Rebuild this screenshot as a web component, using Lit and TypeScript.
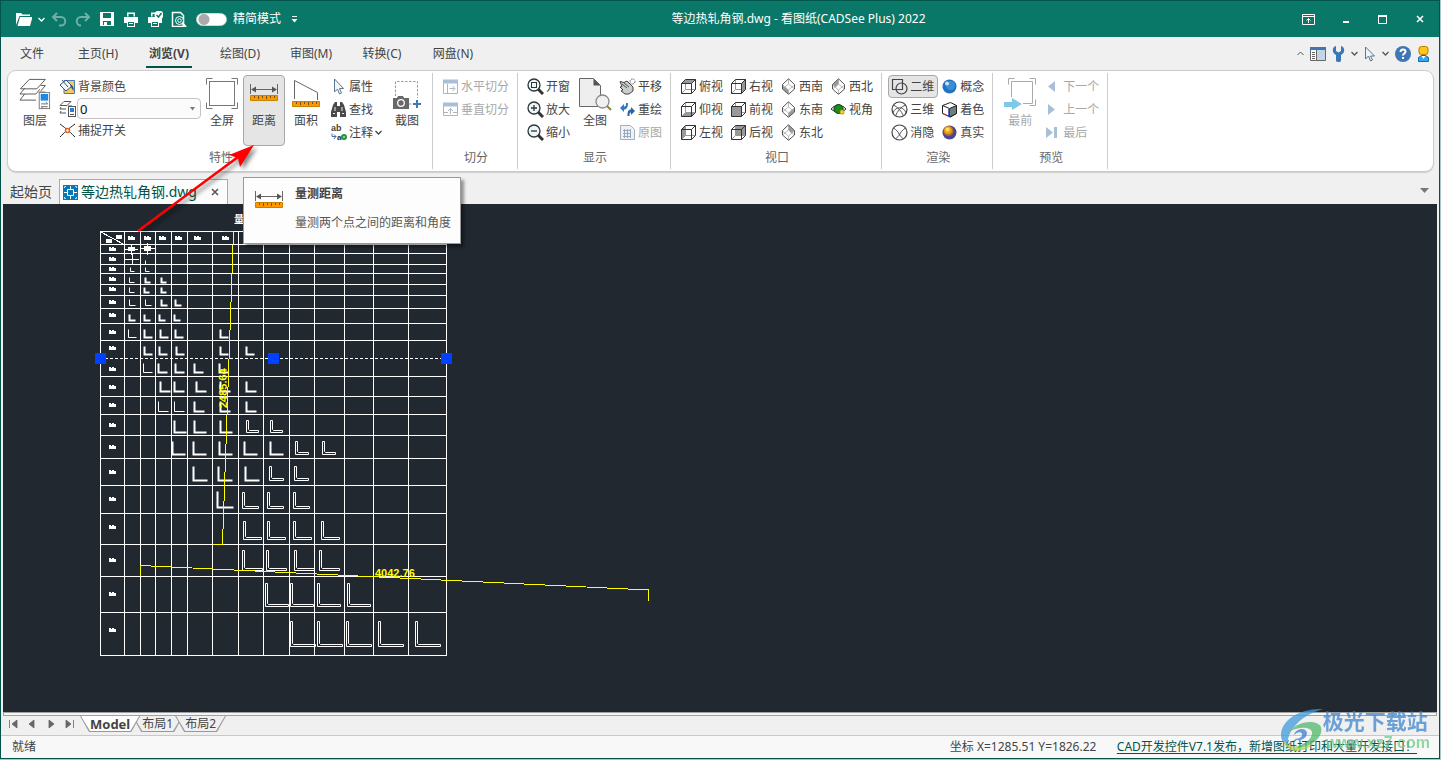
import { LitElement, html, svg, css, nothing, TemplateResult, SVGTemplateResult } from "lit";
import { customElement, property, state } from "lit/decorators.js";
import { classMap } from "lit/directives/class-map.js";

const FADE = "#a9bfd6";

const icon = (w: number, h: number, body: SVGTemplateResult) =>
  html`<svg class="ic" width=${w} height=${h} viewBox="0 0 ${w} ${h}" fill="none" aria-hidden="true">${body}</svg>`;

/* ---------- title bar glyphs ---------- */
const printer = svg`<path d="M4 1.5h8v4H4z M1 6h14v6h-3v-2H4v2H1z" fill="#fff"/><path d="M5.500 3h5v3h-5z" fill="#0a7868"/><rect x="4.500" y="10.500" width="7" height="5" fill="#0a7868" stroke="#fff"/><path d="M6 12.500h4" stroke="#fff"/>`;
const titleIcons: Record<string, TemplateResult> = {
  open: icon(16, 16, svg`<path d="M0 14V2h5l1.500 1.500H14V5H3.500z" fill="#fff"/><path d="M4 6h12.500L14 15H1.500z" fill="#fff"/>`),
  undo: icon(16, 16, svg`<path d="M6 2L2 6l4 4M2 6h8a4 4 0 0 1 0 8.500H8" stroke="#6fb0a6" stroke-width="2"/>`),
  redo: icon(16, 16, svg`<path d="M10 2l4 4-4 4M14 6H6a4 4 0 0 0 0 8.500" stroke="#6fb0a6" stroke-width="2"/>`),
  save: icon(16, 16, svg`<path d="M1 1h14v14H1z" fill="#fff"/><path d="M4 2h8v5H4zM4 10h8v4H4z" fill="#0a7868"/><path d="M5 11h3v3H5z" fill="#fff"/>`),
  print: icon(16, 16, printer),
  batch: icon(16, 16, svg`${printer}<circle cx="12" cy="4" r="4.500" fill="#fff"/><path d="M9.500 4l2 2 3-4" stroke="#0a7868" stroke-width="1.500"/>`),
  preview: icon(16, 16, svg`<path d="M1.500 1.500h8l3 3v11h-11z" stroke="#fff" stroke-width="1.500"/><circle cx="8.500" cy="9.500" r="4" fill="#0a7868" stroke="#fff"/><circle cx="8.500" cy="9.500" r="1.800" stroke="#fff"/><path d="M11 12l4 4" stroke="#fff" stroke-width="2"/>`),
};
const chevron = (c: string) => icon(7, 5, svg`<path d="M.5 1l3 3 3-3" stroke=${c} stroke-width="1.300"/>`);

/* ---------- large ribbon icons, 32 x 32 ---------- */
const ruler = svg`<path d="M2.500 6v10M29.500 6v10M4 11.500h24" stroke="#666"/><path d="M3 11.500l5-3v6zM29 11.500l-5-3v6z" fill="#555"/>
  <path d="M2.500 17.500h27v5h-27z" fill="#ff9800" stroke="#c98200"/><path d="M6.500 18v2M10.500 18v3M14.500 18v2M18.500 18v3M22.500 18v2M26.500 18v2" stroke="#6b5220"/>`;
const frame = (c: string) => svg`<path d="M.5 6.500v-6h6M25.500.5h6v6M31.500 24.500v6h-6M6.500 30.500h-6v-6" stroke=${c}/>`;
const big: Record<string, TemplateResult> = {
  layer: icon(32, 34, svg`<path d="M10 1.500h17l-9 10H.5z" stroke="#555"/><path d="M5 11l-5 6h17l4-5M5 17l-5 6.500h17M22 8h5l-5 6M20 15h7" stroke="#555"/>
    <rect x="20.500" y="15.500" width="11" height="17" fill="#fff" stroke="#777"/><path d="M22 17h8v7h-8z" fill="#1e88e5"/><path d="M22.500 27.500h7l-2-2M29.500 30.500h-7l2 2" stroke="#666"/>`),
  full: icon(32, 32, svg`${frame("#777")}<rect x="3.500" y="3.500" width="25" height="24" stroke="#777"/>`),
  dist: icon(32, 32, ruler),
  area: icon(32, 32, svg`<path d="M4.500 21V2.500l23 12V22" stroke="#666"/><path d="M2.500 23.500h27v5h-27z" fill="#ff9800" stroke="#c98200"/><path d="M6.500 24v2M10.500 24v3M14.500 24v2M18.500 24v3M22.500 24v2M26.500 24v2" stroke="#6b5220"/>`),
  shot: icon(32, 32, svg`<path d="M4.500 18V3.500h22V20M18 26h4" stroke="#999" stroke-dasharray="2.500 1.500"/><path d="M2 20h4l1-2h5l1 2h5v11H2z" fill="#686868"/><circle cx="10" cy="25" r="3.300" stroke="#fff" stroke-width="1.300"/><path d="M26 22v8M22 26h8" stroke="#3d7ab8" stroke-width="2"/>`),
  extents: icon(32, 32, svg`<path d="M.5.500h14l7 7v21H.5z" fill="#eee" stroke="#666"/><path d="M14.500.500l7 7h-7z" fill="#555"/><circle cx="23.500" cy="23.500" r="6.500" fill="#f0f0f0" stroke="#888" stroke-width="1.300"/><path d="M28 28l4 4" stroke="#8a8440" stroke-width="2"/>`),
  first: icon(32, 32, svg`<path d="M4.500 6.500v-6h6M25.500.5h6v6M31.500 21.500v6h-6" stroke="#aaa"/><path d="M7.500 19V3.500h21v22H19" stroke="#aaa"/><path d="M0 24h8v-4l10 6-10 6v-3H0z" fill="#7ccae5"/>`),
};

/* ---------- small ribbon icons, 17 x 17 ---------- */
const sm = (b: SVGTemplateResult) => icon(17, 17, b);
const lens = (b: SVGTemplateResult) => sm(svg`<path d="M11 11l5 5" stroke="#333" stroke-width="3"/><circle cx="7" cy="7" r="6" fill="#eef5f7" stroke="#26383c" stroke-width="1.300"/>${b}`);
const faces: Record<string, string> = {
  top: "1.5,5.5 5.5,1.5 15.5,1.5 11.5,5.5",
  bottom: "1.5,15.5 11.5,15.5 15.5,11.5 5.5,11.5",
  left: "1.5,5.5 5.5,1.5 5.5,11.5 1.5,15.5",
  right: "11.5,5.5 15.5,1.5 15.5,11.5 11.5,15.5",
  front: "1.5,5.5 11.5,5.5 11.5,15.5 1.5,15.5",
  back: "5.5,1.5 15.5,1.5 15.5,11.5 5.5,11.5",
};
const cube = (f: string) => sm(svg`<polygon points=${faces[f]} fill="#999"/><path d="M5.500 1.500v10h10M1.500 15.500l4-4" stroke="#999"/>
  <path d="M1.500 5.500h10v10h-10zM1.500 5.500l4-4h10v10l-4 4M11.500 5.500l4-4" stroke="#333"/>`);
const isoFaces: Record<string, string> = {
  sw: "2.5,7 8.5,12 8.5,16 2.5,11",
  se: "14.5,7 8.5,12 8.5,16 14.5,11",
  ne: "8.5,1 14.5,7 11,9 8.5,6",
  nw: "8.5,1 2.5,7 6,9 8.5,6",
};
const iso = (f: string) => sm(svg`<polygon points=${isoFaces[f]} fill="#999"/><path d="M8.500 1v5l-6 5M8.500 6l6 5M2.500 7l6 5 6-5M8.500 12v4" stroke="#aaa" stroke-width=".8"/>
  <path d="M8.500.8l6 5.700v4.500l-6 5.300-6-5.300V6.500z" stroke="#555"/>`);
const pointer = svg`<path d="M4.500 1v13l3-3 2 5 2-1-2-4.500h4z" fill="#f2f7fc" stroke="#5c7590"/>`;
const small: Record<string, TemplateResult> = {
  bg: sm(svg`<path d="M5 2.500h10.500v13H5z" fill="#f6c860" stroke="#4a7ab0"/><path d="M1 7l6-5 6 6-6 5z" fill="#f2f5f8" stroke="#3b5675"/><path d="M3 2l6 7" stroke="#3b5675"/><path d="M11 7c3 0 4 3 3.500 6l-2-3z" fill="#274f87"/>`),
  layers: sm(svg`<path d="M5 1.500h7l-4 4H1zM2 7l-1 2h6M2 11l-1 2h6M9 6h4" stroke="#555"/><rect x="9.500" y="6.500" width="7" height="10" fill="#fff" stroke="#555"/><path d="M11 8h4v4h-4z" fill="#2a7fd4"/><path d="M11 14.500h4" stroke="#555"/>`),
  snap: sm(svg`<path d="M1 2c4 3 8 6 15 13M16 2C9 7 5 11 1 15" stroke="#222"/><circle cx="8.500" cy="8.500" r="2" fill="#fff" stroke="#e8601c" stroke-width="1.500"/>`),
  props: sm(pointer),
  find: sm(svg`<path d="M3 4l2-3h2v4h3V1h2l2 3 2 7v5h-6v-5H7v5H1v-5z" fill="#4a4a4a"/><path d="M5 6v4M12 6v4M3 12.500h2M12 12.500h2" stroke="#eee"/>`),
  note: sm(svg`<text x="1" y="7" font-size="9" font-weight="700" font-family="Liberation Sans" fill="#444">ab</text><text x="7" y="16" font-size="8" font-weight="700" font-family="Liberation Sans" fill="#333">a</text><circle cx="14" cy="13" r="3" fill="#1c9a35"/><path d="M13 13h2" stroke="#fff"/><path d="M2 9.500v3h4l-2-2M4 15l2-2.500" stroke="#4a6ca8"/>`),
  hsplit: sm(svg`<path d="M1 1.500h15v4H1z" fill=${FADE}/><path d="M1.500 5v10.500h14V5M5.500 6v9M7.500 10.500h5M10.500 8l2.500 2.500-2.500 2.500" stroke="#a9b6c4"/>`),
  vsplit: sm(svg`<path d="M1 1.500h15v4H1z" fill=${FADE}/><path d="M1.500 5v9.500h14V5M2 11.500h4M11 11.500h4M8.500 13V8M6 10l2.500-2.500L11 10" stroke="#a9b6c4"/>`),
  win: lens(svg`<rect x="4.500" y="4.500" width="5" height="5" stroke="#333"/>`),
  zin: lens(svg`<path d="M4 7h6M7 4v6" stroke="#333" stroke-width="1.300"/>`),
  zout: lens(svg`<path d="M4 7h6" stroke="#333" stroke-width="1.300"/>`),
  pan: sm(svg`<path d="M1 3.500l4 1 3-1.500 6 6v4l-4 3H6l-4-3 2-1-3-3 2-.5z" fill="#ccc" stroke="#444"/><path d="M3 6l5 4M5 5l5 4" stroke="#555"/><circle cx="13.500" cy="3.500" r="2.500" stroke="#555" stroke-dasharray="1.500 1"/>`),
  redraw: sm(svg`<path d="M1 7l4-4v2.500c2 0 2-1 2-3.500h2c0 4-1 6.500-4 6.500V11z" fill="#2f7cc4"/><path d="M16 10l-4-4v2.500C9 8.500 8.500 11 8.500 15h2c0-2 0-3.500 1.500-3.500V14z" fill="#2b66a8"/>`),
  orig: sm(svg`<path d="M1.500 1.500h10l4 4v10h-14z" fill="#eef1f6" stroke="#a4afc0"/><path d="M4 6.500h8M4 9.500h8M4 12.500h8M5.500 5v9M8.500 5v9M11.500 5v9" stroke="#9aa8be"/>`),
  top: cube("top"), bottom: cube("bottom"), left: cube("left"),
  right: cube("right"), front: cube("front"), back: cube("back"),
  sw: iso("sw"), se: iso("se"), ne: iso("ne"), nw: iso("nw"),
  eye: sm(svg`<path d="M1 8c4-5 11-5 15 0-4 4-11 4-15 0z" fill="#d6dccf" stroke="#333"/><circle cx="8.500" cy="8" r="4.500" fill="#1d8c1d" stroke="#103f10"/><circle cx="12" cy="11" r="2.200" fill="#f2d21c" stroke="#8a6d00" stroke-width=".6"/>`),
  d2: sm(svg`<path d="M1.500 1.500h10v10h-10z" stroke="#444" stroke-width="1.200"/><circle cx="10.500" cy="10.500" r="5.500" stroke="#444" stroke-width="1.200"/>`),
  d3: sm(svg`<circle cx="8.500" cy="8.500" r="7.500" stroke="#444" stroke-width="1.200"/><path d="M2.500 4c4 2 8 6 10 11M14.500 4c-5 2-8 6-10 11M2 12C4 5 13 5 15 12" stroke="#555"/>`),
  hide: sm(svg`<circle cx="8.500" cy="8.500" r="7.500" stroke="#444" stroke-width="1.200"/><path d="M2.500 4c3 2 5 4 6 7 1-3 3-5 6-7M8.500 11l-4 4M8.500 11l4 4" stroke="#555"/>`),
  concept: sm(svg`<circle cx="8.500" cy="8.500" r="7" fill="#2272c0"/><circle cx="9.500" cy="7.500" r="4.500" fill="#3b8fd8"/><circle cx="6" cy="5.500" r="2" fill="#c9e4f8"/>`),
  shade: sm(svg`<path d="M1.500 4.500l8-3 6 3v8l-6 3.500-8-3.500z" fill="#fff" stroke="#222"/><path d="M8.500 7.500l7-3v8l-7 3.500z" fill="#6d8080" stroke="#222"/><path d="M1.500 4.500l7 3" stroke="#222"/><path d="M8 8v8" stroke="#1d3fc4" stroke-width="1.500"/><path d="M2 12.500l5 2.500" stroke="#c02626"/>`),
  real: sm(svg`<circle cx="8.500" cy="8.500" r="7" fill="#4a4590"/><circle cx="7.500" cy="7" r="5" fill="#b0702c"/><circle cx="7" cy="6.300" r="3.800" fill="#ee9f1c"/><circle cx="6.500" cy="5.500" r="2" fill="#ffdc50"/>`),
  next: sm(svg`<path d="M11 3v11L4 8.500z" fill=${FADE}/>`),
  prev: sm(svg`<path d="M4 3v11l7-5.500z" fill=${FADE}/>`),
  last: sm(svg`<path d="M2 3v11l7-5.500zM10 3h3v11h-3z" fill=${FADE}/>`),
};

/* ---------- drawing data ---------- */
const COLS = [100, 124, 140, 155, 171, 187, 212, 238, 263, 289, 314, 344, 373, 408, 446];
const ROWS = [231, 244, 253, 264, 273, 284, 295, 308, 323, 340, 376, 396, 414, 435, 458, 485, 513, 544, 576, 612, 655];
const MARKS = [249, 259, 269, 279, 289, 302, 315, 332, 348, 369, 387, 405, 425, 447, 472, 499, 527, 560, 594, 630];
// size, weight (1 thin, 2 bold, 3 outline), top, then the left edges
const ANGLES: [number, number, number, number[]][] = [
  [4, 1, 260, [145]],
  [4, 1, 267, [130, 145]],
  [5, 1, 277, [129]], [5, 2, 277, [145, 161]],
  [5, 1, 287, [129]], [5, 2, 287, [144, 161]],
  [6, 1, 299, [129, 145]], [6, 2, 299, [161, 175]],
  [6, 2, 314, [129, 144, 159, 174]],
  [8, 1, 329, [128]], [8, 2, 329, [144, 160, 175, 220]],
  [8, 2, 346, [144, 159, 176, 220, 246]],
  [9, 1, 363, [143]], [9, 2, 363, [158, 175, 194, 219]],
  [10, 2, 381, [160, 174, 196, 220, 246]],
  [10, 1, 401, [158, 174]], [10, 2, 401, [194, 220, 246]],
  [12, 2, 420, [174, 194, 220]], [12, 3, 420, [246, 270]],
  [13, 2, 441, [172, 193, 219, 244, 270]], [13, 3, 441, [295, 322]],
  [14, 2, 466, [193, 218, 245]], [14, 3, 466, [269, 294]],
  [16, 2, 491, [217]], [16, 3, 492, [242, 267, 293]],
  [18, 3, 521, [243, 267, 293, 321]],
  [20, 3, 550, [242, 266, 294, 319]],
  [23, 3, 583, [265, 290, 317, 347]],
  [25, 3, 621, [290, 317, 346, 378, 415]],
];

@customElement("drawing-canvas")
export class DrawingCanvas extends LitElement {
  static styles = css`
    :host { display: block; flex: 1; min-height: 0; overflow: hidden; background: #212830; }
    svg { display: block; width: 100%; height: 100%; }
    .dim { font: bold 11px "Liberation Sans", sans-serif; fill: #ff0; }
    .head { font: bold 10px "Noto Sans CJK SC", sans-serif; fill: #fff; }
  `;

  private angle(x: number, y: number, s: number, weight: number) {
    const l = x + 0.5, t = y + 0.5;
    if (weight === 3) {
      return svg`<path d="M${l} ${t}h2v${s - 3}l1 1h${s - 3}v2h-${s}z" stroke="#fff"/>`;
    }
    return svg`<path d="M${l} ${t}v${s}h${s}" stroke="#fff" stroke-width=${weight}/>`;
  }

  private blob(x: number, y: number) {
    return svg`<path d="M${x - 3} ${y - 2}h2v1h1v-1h2v1h2v3h-7z" fill="#fff"/>`;
  }

  render() {
    return html`<svg fill="none" role="img" aria-label="等边热轧角钢">
      <g transform="translate(-3 -204)">
        <text class="head" x="234" y="223">量</text>
        <g stroke="#fff" shape-rendering="crispEdges">
          ${COLS.map((x) => svg`<path d="M${x + 0.5} 231v425"/>`)}
          ${ROWS.map((y) => svg`<path d="M100 ${y + 0.5}h347"/>`)}
          <path d="M100 358.500h347" stroke-dasharray="3 2"/>
          <path d="M100 231.500l24 13M125 249.500h13M131.500 245v10M140 248.500h15M147.500 243v12M125 259.500h14M132.500 254v10"/>
        </g>
        <path d="M128 247h7v4h-7zM144 246h7v5h-7zM116 235h6v4h-6zM106 239h6v4h-6z" fill="#fff"/>
        ${MARKS.map((y) => this.blob(112, y))}
        ${[131, 147, 162, 178, 197, 225].map((x) => this.blob(x, 238))}
        ${ANGLES.map(([s, w, y, xs]) => xs.map((x) => this.angle(x, y, s, w)))}
        <g stroke="#ff0" shape-rendering="crispEdges">
          <path d="M223 231.500h10"/>
          <path d="M233.500 231L222.500 544"/>
          <path d="M213 544.500h10"/>
          <path d="M140.500 576v-10.500L648.500 590v11"/>
        </g>
        <text class="dim" x="375" y="577">4042.76</text>
        <text class="dim" transform="translate(227 408) rotate(-91)">2485.64</text>
        ${[95, 268, 441].map((x) => svg`<rect x=${x} y="353" width="11" height="11" fill="#0040ff"/>`)}
      </g>
    </svg>`;
  }
}

@customElement("app-root")
export class AppRoot extends LitElement {
  @property({ type: String }) file = "等边热轧角钢.dwg";
  @state() private menu = "浏览(V)";
  @state() private sheet = "Model";

  static styles = css`
    :host {
      display: block; height: 100vh; box-sizing: border-box; padding: 0 1px 1px 0; background: #a9c6c8;
      font: 12px/16px "Noto Sans", "Noto Sans CJK SC", sans-serif; color: #444;
    }
    * { box-sizing: border-box; }
    button, select { font: inherit; color: inherit; background: none; border: 0; padding: 0; margin: 0; }
    button { display: flex; align-items: center; justify-content: center; white-space: nowrap; }
    .ic { display: block; flex: none; }
    .window { position: relative; display: flex; flex-direction: column; height: 100%; border: 1px solid #00544a; background: #f0f0f0; overflow: hidden; }

    .title { display: flex; align-items: center; height: 36px; flex: none; background: #0a7868; color: #fff; padding: 0 1px 0 11px; }
    .title .tool { width: 24px; height: 32px; }
    .title .drop { width: 11px; height: 32px; }
    .title h1 { flex: 1; margin: 0; font: inherit; text-align: center; }
    .mode { display: flex; align-items: center; gap: 6px; padding-left: 5px; }
    .mode input { appearance: none; width: 31px; height: 13px; margin: 0; border-radius: 7px; background: radial-gradient(circle at 7px 50%, #aaa 5px, #fff 6px); border: 1px solid #c8dcd8; }
    .more { width: 26px; height: 32px; }
    .sys { width: 37px; height: 32px; }

    .menu { display: flex; align-items: center; height: 33px; flex: none; padding: 0 9px 0 13px; }
    .menu nav { display: flex; gap: 25px; flex: 1; }
    .menu nav button { min-width: 46px; height: 29px; padding-top: 2px; border-bottom: 2px solid transparent; }
    .menu nav button:first-child { min-width: 36px; }
    .menu nav .on { font-weight: 700; border-color: #00544a; }
    .tools { display: flex; align-items: center; gap: 6px; }

    .ribbon { display: flex; flex: none; margin: 0 5px 0 6px; padding: 2px 0; background: #fff; border: 1px solid #ccc; border-radius: 9px; box-shadow: 0 1px 1px #ccc; }
    .group { display: flex; flex-direction: column; padding: 2px 4px 0 6px; border-right: 1px solid #ccc; }
    .items { display: flex; height: 71px; }
    .caption { text-align: center; color: #666; padding: 4px 0 3px; }
    .col { display: flex; flex-direction: column; }
    .big { flex-direction: column; justify-content: flex-start; width: 42px; height: 71px; padding-top: 2px; border: 1px solid transparent; border-radius: 4px; }
    .big .ic { height: 32px; overflow: visible; margin-bottom: 3px; }
    .small { height: 23px; padding: 0 3px 0 2px; gap: 2px; border: 1px solid transparent; border-radius: 4px; justify-content: flex-start; }
    .pressed { background: #e5e5e5; border-color: #a8a8a8; }
    .off { color: #a8a8a8; }
    .layer { display: flex; align-items: center; gap: 1px; height: 21px; padding-left: 3px; }
    .combo { position: relative; width: 124px; }
    .combo select { appearance: none; display: block; width: 100%; height: 21px; padding: 0 2px; border: 1px solid #c4c4c4; border-radius: 4px; background: #fbfbfb; color: #111; font-size: 13px; }
    .combo .ic { position: absolute; right: 5px; top: 9px; pointer-events: none; }

    .docs { display: flex; align-items: flex-end; height: 32px; flex: none; padding: 0 10px 0 9px; font-size: 14px; line-height: 20px; }
    .docs .start { height: 25px; margin-right: 7px; }
    .doc { display: flex; align-items: center; gap: 3px; height: 25px; padding: 0 8px 0 3px; background: #fcfcfc; border: 1px solid #aaa; border-bottom: 0; color: #00544a; }
    .doc .close { margin-left: 11px; }
    .docs .list { margin-left: auto; height: 28px; }

    .view { display: flex; flex: 1; min-height: 0; margin: 0 2px; }
    .split { flex: none; height: 4px; margin: 0 2px; border: 1px solid #a0a0a0; background: #f4f4f4; }
    .sheets { display: flex; flex: none; height: 20px; padding-left: 2px; border-bottom: 1px solid #c8c8c8; }
    .sheets .nav { width: 19px; height: 16px; }
    .sheet { position: relative; isolation: isolate; height: 16px; padding: 0 10px; margin-right: -8px; }
    .sheet::before, .sheet::after { content: ""; position: absolute; inset: 0; z-index: -2; background: #999; clip-path: polygon(0 0, 100% 0, calc(100% - 9px) 100%, 9px 100%); }
    .sheet::after { inset: 0 1px 1px; z-index: -1; background: #f0f0f0; }
    .sheet.on { z-index: 1; font-weight: 700; font-size: 13px; }
    .sheet.on::after { background: #fff; }
    .sheets .first { margin-left: 1px; }
    .status { display: flex; align-items: center; flex: none; height: 22px; padding: 0 22px 0 11px; background: #f8f8f8; }
    .status output { margin-left: auto; margin-right: 12px; min-width: 155px; }
    .status a { color: #00544a; text-decoration: underline; text-underline-offset: 2px; }

    .tip { position: absolute; left: 242px; top: 176px; display: flex; gap: 10px; padding: 7px 9px 11px 9px; background: #fdfdfd; border: 1px solid #9a9a9a; box-shadow: 3px 3px 3px #0006; line-height: 18px; color: #575757; }
    .tip strong { display: block; color: #444; margin-bottom: 11px; }
    .arrow { position: absolute; left: 129px; top: 139px; filter: drop-shadow(3px 3px 2px #0007); pointer-events: none; }
    .mark { position: absolute; right: 9px; bottom: 4px; display: flex; pointer-events: none; opacity: .75; font-family: "Noto Sans CJK SC", sans-serif; font-weight: 700; }
    .mark .name { display: block; font-size: 21px; line-height: 25px; color: #3f86cf; }
    .mark .site { display: block; padding-left: 3px; font: bold 16px/20px "Liberation Sans", sans-serif; color: #74c98a; }
  `;

  private big(ic: string, label: string, cls = "") {
    return html`<button class="big ${cls}">${big[ic]}<span>${label}</span></button>`;
  }

  private col(items: [string, string, string?][], tail: TemplateResult | typeof nothing = nothing) {
    return html`<div class="col">
      ${items.map(([ic, label, cls = ""], i) => html`<button class="small ${cls}">${small[ic]}<span>${label}</span>${i === 2 ? tail : nothing}</button>`)}
    </div>`;
  }

  private group(label: string, body: TemplateResult) {
    return html`<section class="group" aria-label=${label}><div class="items">${body}</div><div class="caption">${label}</div></section>`;
  }

  private ribbon() {
    return html`<div class="ribbon">
      ${this.group("特性", html`
        ${this.big("layer", "图层")}
        <div class="col">
          <button class="small">${small.bg}<span>背景颜色</span></button>
          <div class="layer">${small.layers}
            <label class="combo"><select aria-label="图层"><option>0</option></select>${icon(7, 4, svg`<path d="M1 0h5L3.500 3.500z" fill="#777"/>`)}</label>
          </div>
          <button class="small">${small.snap}<span>捕捉开关</span></button>
        </div>
        ${this.big("full", "全屏")}${this.big("dist", "距离", "pressed")}${this.big("area", "面积")}
        ${this.col([["props", "属性"], ["find", "查找"], ["note", "注释"]], chevron("#444"))}
        ${this.big("shot", "截图")}`)}
      ${this.group("切分", this.col([["hsplit", "水平切分", "off"], ["vsplit", "垂直切分", "off"]]))}
      ${this.group("显示", html`
        ${this.col([["win", "开窗"], ["zin", "放大"], ["zout", "缩小"]])}
        ${this.big("extents", "全图")}
        ${this.col([["pan", "平移"], ["redraw", "重绘"], ["orig", "原图", "off"]])}`)}
      ${this.group("视口", html`
        ${this.col([["top", "俯视"], ["bottom", "仰视"], ["left", "左视"]])}
        ${this.col([["right", "右视"], ["front", "前视"], ["back", "后视"]])}
        ${this.col([["sw", "西南"], ["se", "东南"], ["ne", "东北"]])}
        ${this.col([["nw", "西北"], ["eye", "视角"]])}`)}
      ${this.group("渲染", html`
        ${this.col([["d2", "二维", "pressed"], ["d3", "三维"], ["hide", "消隐"]])}
        ${this.col([["concept", "概念"], ["shade", "着色"], ["real", "真实"]])}`)}
      ${this.group("预览", html`
        ${this.big("first", "最前", "off")}
        ${this.col([["next", "下一个", "off"], ["prev", "上一个", "off"], ["last", "最后", "off"]])}`)}
    </div>`;
  }

  render() {
    const menus = ["文件", "主页(H)", "浏览(V)", "绘图(D)", "审图(M)", "转换(C)", "网盘(N)"];
    const sheets = ["Model", "布局1", "布局2"];
    const navs: [string, string][] = [
      ["首页", "M4.500 4v8M12 4v8L7 8z"], ["上一页", "M10 4v8L5 8z"], ["下一页", "M6 4v8l5-4z"], ["末页", "M4 4v8l5-4zM11.500 4v8"],
    ];
    return html`<div class="window">
      <header class="title">
        <button class="tool" aria-label="打开">${titleIcons.open}</button>
        <button class="drop" aria-label="最近文件">${chevron("#fff")}</button>
        ${[["undo", "撤销"], ["redo", "重做"], ["save", "保存"], ["print", "打印"], ["batch", "批量打印"], ["preview", "打印预览"]].map(
          ([k, n]) => html`<button class="tool" aria-label=${n}>${titleIcons[k]}</button>`)}
        <label class="mode"><input type="checkbox" role="switch" />精简模式</label>
        <button class="more" aria-label="自定义">${icon(7, 7, svg`<path d="M1 .5h5" stroke="#fff"/><path d="M.5 3h6l-3 3.500z" fill="#fff"/>`)}</button>
        <h1>${this.file} - 看图纸(CADSee Plus) 2022</h1>
        <button class="sys" aria-label="置顶">${icon(13, 11, svg`<path d="M.5.500h12v10H.5zM1 2.500h11M6.500 9V4.500M4.500 6.500l2-2 2 2" stroke="#fff"/>`)}</button>
        <button class="sys" aria-label="最小化">${icon(10, 10, svg`<path d="M2 8h6" stroke="#fff" stroke-width="2"/>`)}</button>
        <button class="sys" aria-label="最大化">${icon(9, 9, svg`<path d="M.5 1h8v7.500h-8z" stroke="#fff"/><path d="M0 1h9" stroke="#fff" stroke-width="2"/>`)}</button>
        <button class="sys" aria-label="关闭">${icon(8, 8, svg`<path d="M1 1l6 6M7 1L1 7" stroke="#fff" stroke-width="1.600"/>`)}</button>
      </header>

      <div class="menu">
        <nav>${menus.map((m) => html`<button class=${classMap({ on: m === this.menu })} @click=${() => (this.menu = m)}>${m}</button>`)}</nav>
        <div class="tools">
          <button aria-label="收起">${icon(7, 5, svg`<path d="M.5 4l3-3 3 3" stroke="#555"/>`)}</button>
          <button aria-label="面板">${icon(16, 14, svg`<path d="M.5.500h15v13H.5z" fill="#fff" stroke="#666"/><path d="M0 0h16v3H0z" fill="#3f76b5"/><path d="M7 3h8v10H7z" fill="#c5d5e8"/><path d="M2 5.500h3M2 7.500h3M2 9.500h3M2 11.500h3M6.500 3v10" stroke="#666"/>`)}</button>
          <button aria-label="设置">${icon(13, 16, svg`<path d="M4 0v5l2.500 1.500L9 5V0c4 1 4.500 7 0 9v5.500a2.500 1.500 0 0 1-5 0V9C-.5 7 0 1 4 0z" fill="#3a77b7"/>`)}</button>
          <button aria-label="设置选项">${chevron("#555")}</button>
          <button aria-label="选择">${icon(12, 16, svg`<path d="M1.500 1v12l3-3 2 5 2-1-2-4h4z" fill="#eef4fa" stroke="#5c7590"/>`)}</button>
          <button aria-label="选择选项">${chevron("#555")}</button>
          <button aria-label="帮助">${icon(16, 16, svg`<circle cx="8" cy="8" r="8" fill="#3f76b5"/><path d="M5.500 6c0-3.500 5-3 5-.5 0 2-2.500 2-2.500 4M8 11v2" stroke="#fff" stroke-width="2"/>`)}</button>
          <button aria-label="账户">${icon(13, 16, svg`<rect x="2" y=".5" width="9" height="8" rx="2.500" fill="#ffc61a" stroke="#b87800"/><path d="M1.500 15.500v-4l3-2h4l3 2v4z" fill="#2fa8f0" stroke="#1668b0"/><path d="M4.500 10l2 3 2-3z" fill="#fff"/>`)}</button>
        </div>
      </div>

      ${this.ribbon()}

      <div class="docs">
        <button class="start">起始页</button>
        <div class="doc">
          ${icon(15, 15, svg`<path d="M0 0h15v15H0z" fill="#0877b8"/><path d="M4.500 4.500h6v6h-6zM7.500 1v4M7.500 10v4M1 7.500h4M10 7.500h4" stroke="#fff"/><path d="M1.500 3V1.500H3M12 1.500h1.500V3M1.500 12v1.500H3M12 13.500h1.500V12" stroke="#bfe0f2"/>`)}
          <span>${this.file}</span>
          <button class="close" aria-label="关闭文档">${icon(8, 8, svg`<path d="M1 1l6 6M7 1L1 7" stroke="#555" stroke-width="1.500"/>`)}</button>
        </div>
        <button class="list" aria-label="文档列表">${icon(9, 5, svg`<path d="M0 0h9L4.500 5z" fill="#777"/>`)}</button>
      </div>

      <main class="view"><drawing-canvas></drawing-canvas></main>
      <div class="split"></div>

      <div class="sheets">
        ${navs.map(([n, d]) => html`<button class="nav" aria-label=${n}>${icon(16, 16, svg`<path d=${d} fill="#666" stroke="#666" stroke-width=".8"/>`)}</button>`)}
        ${sheets.map((s, i) => html`<button class=${classMap({ sheet: true, first: i === 0, on: s === this.sheet })} @click=${() => (this.sheet = s)}>${s}</button>`)}
      </div>
      <footer class="status">
        <span>就绪</span>
        <output>坐标 X=1285.51 Y=1826.22</output>
        <a href="#news">CAD开发控件V7.1发布，新增图纸打印和大量开发接口！</a>
      </footer>

      <div class="tip" role="tooltip">${icon(32, 32, ruler)}<div><strong>量测距离</strong>量测两个点之间的距离和角度</div></div>
      <svg class="arrow" width="130" height="96" viewBox="0 0 130 96" aria-hidden="true">
        <path d="M8 91L108 17" stroke="#f00" stroke-width="2.500"/><path d="M124 5L99 15l9 3 2 9z" fill="#f00"/>
      </svg>
      <div class="mark">
        <svg width="43" height="46" viewBox="0 0 43 46" aria-hidden="true">
          <path d="M43 1C20 0 1 12 1 27c0 6 3 9 7 11-2-14 11-30 35-37z" fill="#3f9bdc"/>
          <path d="M10 23c8-10 27-12 31-4 3 11-12 23-31 21 14-2 23-9 22-16-2-6-14-5-22-1z" fill="#52b86c"/>
          <path d="M14 27c2-7 12-8 13-2 0 6-8 9-13 6 6 0 9-3 8-5-1-3-5-2-8 1z" fill="#3f7fcf"/>
          <path d="M3 32c5 8 20 9 31 3-9 10-27 12-31-3z" fill="#b6cf4a"/>
        </svg>
        <div><span class="name">极光下载站</span><span class="site">www.xz7.com</span></div>
      </div>
    </div>`;
  }
}
